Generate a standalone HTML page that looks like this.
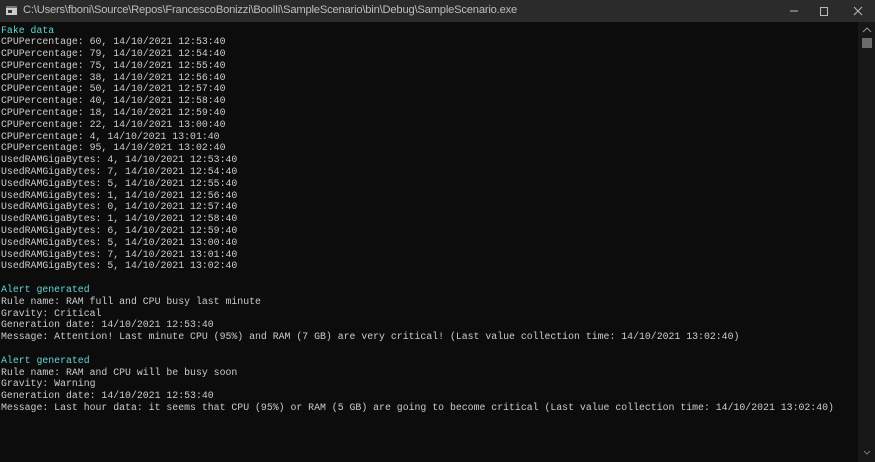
<!DOCTYPE html>
<html><head><style>
html,body{margin:0;padding:0;width:875px;height:462px;overflow:hidden;background:#0c0c0c;}
.title{position:absolute;left:0;top:0;width:875px;height:22px;background:#2b2b2b;color:#bdbdbd;font:11.2px "Liberation Sans",sans-serif;}
.title .t{position:absolute;left:23px;top:4px;letter-spacing:-0.2px;}
.icon{position:absolute;left:6px;top:6px;width:11px;height:9px;background:#ccc;border-top:2px solid #777;box-sizing:border-box;}
.icon:after{content:"";position:absolute;left:2px;top:2px;width:4px;height:3px;background:#333;}
pre{position:absolute;left:1px;top:24.5px;margin:0;font:9.85px/11.8px "Liberation Mono",monospace;color:#cccccc;}
.c{color:#61d6d6;}
.sb{position:absolute;left:858px;top:22px;width:17px;height:440px;background:#171717;}
.thumb{position:absolute;left:862px;top:38px;width:10px;height:10px;background:#6b6b6b;}
</style></head><body>
<div class="title"><div class="icon"></div><span class="t">C:\Users\fboni\Source\Repos\FrancescoBonizzi\BoolIi\SampleScenario\bin\Debug\SampleScenario.exe</span>
<svg style="position:absolute;left:780px;top:0" width="95" height="22"><line x1="10" y1="11" x2="18" y2="11" stroke="#bbb"/><rect x="40.5" y="7.5" width="7" height="8" fill="none" stroke="#bbb"/><path d="M74 7 L82 15 M82 7 L74 15" stroke="#bbb"/></svg></div>
<div class="sb"></div><div class="thumb"></div>
<svg style="position:absolute;left:860px;top:25px" width="14" height="10"><path d="M3 7 L7 3 L11 7" stroke="#999" fill="none"/></svg>
<svg style="position:absolute;left:860px;top:448px" width="14" height="10"><path d="M4 3 L7 6 L10 3" stroke="#777" fill="none"/></svg>
<pre><span class="c">Fake data</span>
CPUPercentage: 60, 14/10/2021 12:53:40
CPUPercentage: 79, 14/10/2021 12:54:40
CPUPercentage: 75, 14/10/2021 12:55:40
CPUPercentage: 38, 14/10/2021 12:56:40
CPUPercentage: 50, 14/10/2021 12:57:40
CPUPercentage: 40, 14/10/2021 12:58:40
CPUPercentage: 18, 14/10/2021 12:59:40
CPUPercentage: 22, 14/10/2021 13:00:40
CPUPercentage: 4, 14/10/2021 13:01:40
CPUPercentage: 95, 14/10/2021 13:02:40
UsedRAMGigaBytes: 4, 14/10/2021 12:53:40
UsedRAMGigaBytes: 7, 14/10/2021 12:54:40
UsedRAMGigaBytes: 5, 14/10/2021 12:55:40
UsedRAMGigaBytes: 1, 14/10/2021 12:56:40
UsedRAMGigaBytes: 0, 14/10/2021 12:57:40
UsedRAMGigaBytes: 1, 14/10/2021 12:58:40
UsedRAMGigaBytes: 6, 14/10/2021 12:59:40
UsedRAMGigaBytes: 5, 14/10/2021 13:00:40
UsedRAMGigaBytes: 7, 14/10/2021 13:01:40
UsedRAMGigaBytes: 5, 14/10/2021 13:02:40

<span class="c">Alert generated</span>
Rule name: RAM full and CPU busy last minute
Gravity: Critical
Generation date: 14/10/2021 12:53:40
Message: Attention! Last minute CPU (95%) and RAM (7 GB) are very critical! (Last value collection time: 14/10/2021 13:02:40)

<span class="c">Alert generated</span>
Rule name: RAM and CPU will be busy soon
Gravity: Warning
Generation date: 14/10/2021 12:53:40
Message: Last hour data: it seems that CPU (95%) or RAM (5 GB) are going to become critical (Last value collection time: 14/10/2021 13:02:40)</pre>
</body></html>
